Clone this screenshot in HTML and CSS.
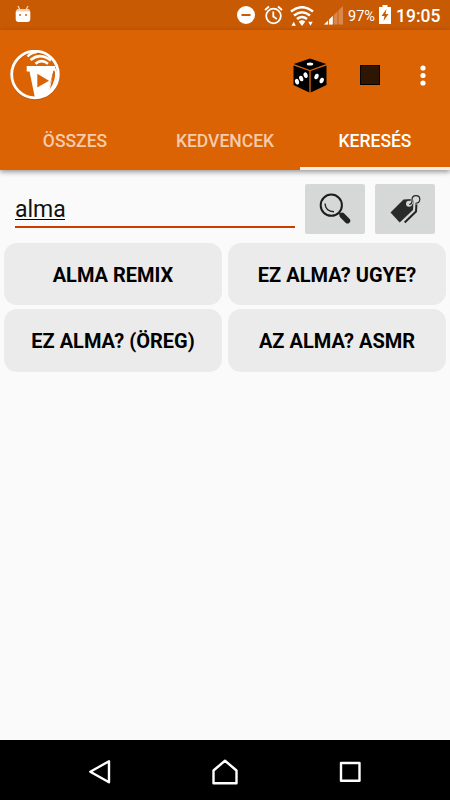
FILE: index.html
```html
<!DOCTYPE html>
<html lang="hu">

<head>
    <meta charset="UTF-8">
    <meta name="viewport" content="width=device-width, initial-scale=1.0">
    <title>Keresés</title>
    <link rel="stylesheet" href="styles.css">
</head>

<body>
    <div class="screen">
        <div class="status-bar">
            <svg class="debug-icon" width="16" height="18" viewBox="0 0 16 18">
                <path d="M3 1l2 4M13 1l-2 4" stroke="#f6d9c4" stroke-width="1.3" />
                <path d="M1 7q0-3 2-3h10q2 0 2 3z" fill="#f3cfb5" />
                <path d="M.7 6.500h14.600v7.500q0 3-3 3H3.700q-3 0-3-3z" fill="#fff" />
                <path d="M4 9h2v2H4zM10 9h2v2h-2z" fill="#e08a50" />
            </svg>
            <div class="status-right">
                <svg width="18" height="18" viewBox="0 0 18 18">
                    <circle cx="9" cy="9" r="9" fill="#fff" />
                    <path d="M4.500 9h9" stroke="#c85a04" stroke-width="2" />
                </svg>
                <svg class="alarm" width="19" height="20" viewBox="0 0 19 20">
                    <g fill="none" stroke="#fff" stroke-width="1.800">
                        <circle cx="9.500" cy="11" r="7.300" />
                        <path d="M9.300 6.500v5l3.500 2.500M1 5l4-3.500M18 5l-4-3.500" />
                    </g>
                </svg>
                <svg class="wifi" width="24" height="21" viewBox="0 0 24 21">
                    <g fill="none" stroke="#fff" stroke-width="2.600">
                        <path d="M1 5.500q11-8.500 22 0" />
                        <path d="M4 9.500q8-6.500 16 0" />
                        <path d="M7 13q5-4 10 0" />
                    </g>
                    <path d="M8.700 15.500q3.300-2.600 6.600 0L12 20zM1.500 19.700l2.200-4 2.200 4zM18.300 15.700h4.400l-2.200 4z" fill="#fff" />
                </svg>
                <svg class="signal" width="20" height="19" viewBox="0 0 20 19">
                    <path d="M0 18.500L19 0v18.500z" fill="#da874b" />
                    <path d="M0 18.500l9-8.800v8.800z" fill="#fff" />
                    <path d="M4.500 10v9M9.300 5v14M14 0v19" stroke="#c85a04" stroke-width=".9" />
                </svg>
                <span class="battery-level">97%</span>
                <svg class="battery" width="12" height="19" viewBox="0 0 12 19">
                    <path d="M3.500 0h5v2H12v17H0V2h3.500z" fill="#fff" />
                    <path d="M7.500 4L2.500 11h3l-1 5 5-7h-3z" fill="#c85a04" />
                </svg>
                <span class="clock">19:05</span>
            </div>
        </div>

        <header class="app-header">
            <div class="toolbar">
                <svg class="logo" width="50" height="51" viewBox="0 0 50 51">
                    <circle cx="25" cy="25.500" r="23.300" fill="none" stroke="#a84c04" stroke-opacity=".5" stroke-width="2.800" />
                    <circle cx="25" cy="24.500" r="23.300" fill="none" stroke="#fff" stroke-width="2.800" />
                    <path d="M17.500 6.500Q21 2.500 27 2" fill="none" stroke="#fff" stroke-width="2.500" />
                    <path d="M20.500 10q9.500-8 20.500.5M25.500 13.700q6-5 12.500 0" fill="none" stroke="#fff" stroke-width="2.700" />
                    <path d="M16.700 16h28.500v4.500h-1.700L37 45.500l-12 2.500L19.500 21.500h-2.800z" fill="#fff" />
                    <path d="M45.500 18l2.500 6-3 12-9 11 2-7z" fill="#fff" />
                    <path d="M45 21.500q.8 9-5 17.500l3.300-17.500z" fill="#db6304" />
                    <path d="M27.300 23.800v13.700L39 30.700z" fill="#db6304" />
                </svg>
                <svg class="dice" width="34" height="35" viewBox="0 0 34 35">
                    <path d="M17 .5L33.300 6 17 12 .7 6z" />
                    <path d="M.5 7.500L16.300 13v21.500L.5 27z" />
                    <path d="M33.500 7.500L17.700 13v21.500L33.500 27z" />
                    <g fill="#fff">
                        <ellipse cx="17" cy="6" rx="3.200" ry="1.500" />
                        <ellipse cx="4" cy="23.700" rx="2" ry="2.900" transform="rotate(-18 4 23.700)" />
                        <ellipse cx="8.200" cy="20.500" rx="2" ry="2.900" transform="rotate(-18 8.200 20.500)" />
                        <ellipse cx="12.600" cy="17.200" rx="2" ry="2.900" transform="rotate(-18 12.600 17.200)" />
                        <ellipse cx="23.500" cy="18.500" rx="2" ry="2.900" transform="rotate(22 23.500 18.500)" />
                        <ellipse cx="28.700" cy="22.500" rx="2" ry="2.900" transform="rotate(22 28.700 22.500)" />
                    </g>
                </svg>
                <div class="stop"></div>
                <svg class="more" width="6" height="21" viewBox="0 0 6 21">
                    <g fill="#fff">
                        <circle cx="3" cy="3" r="2.600" />
                        <circle cx="3" cy="10.500" r="2.600" />
                        <circle cx="3" cy="18" r="2.600" />
                    </g>
                </svg>
            </div>
            <nav class="tabs">
                <div class="tab">ÖSSZES</div>
                <div class="tab">KEDVENCEK</div>
                <div class="tab active">KERESÉS</div>
            </nav>
        </header>

        <main class="content">
            <div class="search-row">
                <div class="search-field"><span class="search-text">alma</span></div>
                <div class="icon-button">
                    <svg width="60" height="50" viewBox="0 0 60 50">
                        <circle cx="26.300" cy="21.200" r="10.600" fill="none" stroke="#1c1c1c" stroke-width="2" />
                        <path d="M20 19.500q.5 8 9 8.300" fill="none" stroke="#222" stroke-width="1.400" />
                        <path d="M33.500 28.500l3 2.500" stroke="#222" stroke-width="2" />
                        <path d="M37.300 31.500l5.200 5.200" stroke="#222" stroke-width="5.500" stroke-linecap="round" />
                    </svg>
                </div>
                <div class="icon-button">
                    <svg width="60" height="50" viewBox="0 0 60 50">
                        <path d="M15.500 28.500L28.500 15.500l8.500-.5 1.500 1.500-.5 9.500-13.300 12.500z" fill="#2a2a2a" />
                        <path d="M41.500 19l-.5 8.500L29.700 38.500" fill="none" stroke="#222" stroke-width="2" />
                        <circle cx="34" cy="19.700" r="3" fill="#d6d8d7" />
                        <path d="M34.200 20.500q3.300-.5 2.800-4.500c0-6 7.800-5.500 7.800-.5q-.3 3.700-4 3.700" fill="none" stroke="#d6d8d7" stroke-width="2.800" />
                        <path d="M34.200 20.500q3.300-.5 2.800-4.500c0-6 7.800-5.500 7.800-.5q-.3 3.700-4 3.700" fill="none" stroke="#222" stroke-width="1.200" />
                    </svg>
                </div>
            </div>
            <div class="sounds">
                <div class="sound">ALMA REMIX</div>
                <div class="sound">EZ ALMA? UGYE?</div>
                <div class="sound">EZ ALMA? (ÖREG)</div>
                <div class="sound">AZ ALMA? ASMR</div>
            </div>
        </main>

        <footer class="nav-bar">
            <svg width="24" height="26" viewBox="0 0 24 26">
                <path d="M21 2.300v20.900L2.300 12.700z" />
            </svg>
            <svg width="26" height="26" viewBox="0 0 26 26">
                <path d="M1.500 24.300V11.500L13 1.700l11.500 9.800v12.800z" />
            </svg>
            <svg width="24" height="26" viewBox="0 0 24 26">
                <path d="M3 4h18.500v17.700H3z" />
            </svg>
        </footer>
    </div>
</body>

</html>
```
FILE: styles.css
```css
body {
    font-family: Roboto, sans-serif;
    background-color: #fafafa;
    margin: 0;
    padding: 0;
}

svg {
    display: block;
    flex-shrink: 0;
}

.screen {
    display: flex;
    flex-direction: column;
    width: 450px;
    height: 800px;
    overflow: hidden;
}

.status-bar {
    display: flex;
    justify-content: space-between;
    height: 30px;
    padding: 0 10px 0 15px;
    background-color: #c85a04;
    color: #fff;
}

.debug-icon {
    margin-top: 5px;
}

.status-right {
    display: flex;
    align-items: center;
}

.alarm {
    margin-left: 9px;
    margin-bottom: 1px;
}

.wifi {
    margin-left: 7px;
    margin-top: 2px;
}

.signal {
    margin-left: 10px;
    margin-top: 1px;
}

.battery-level {
    width: 27px;
    margin-left: 4px;
    margin-top: 3px;
    font-size: 14.5px;
    white-space: nowrap;
}

.battery {
    margin-left: 4px;
    margin-bottom: 1px;
}

.clock {
    width: 44px;
    margin-left: 5px;
    margin-top: 1px;
    font-size: 17.5px;
    font-weight: 500;
    white-space: nowrap;
}

.app-header {
    position: relative;
    height: 140px;
    background-color: #db6304;
    box-shadow: 0 2px 5px rgba(0, 0, 0, 0.4);
}

.toolbar {
    display: flex;
    align-items: center;
    height: 90px;
    padding: 0 24px 0 10px;
}

.dice {
    margin-left: auto;
}

.stop {
    width: 18px;
    height: 18px;
    margin-left: 33px;
    border: 1px solid #000;
    background-color: #2f1602;
}

.more {
    margin-left: 40px;
}

.tabs {
    display: grid;
    grid-template-columns: repeat(3, 150px);
    height: 50px;
}

.tab {
    box-sizing: border-box;
    padding-top: 1px;
    color: #f5cbad;
    font-size: 17.5px;
    font-weight: 500;
    line-height: 40px;
    text-align: center;
}

.tab.active {
    border-bottom: 3px solid #fcebdf;
    color: #fff;
}

.content {
    flex: 1;
}

.search-row {
    display: flex;
    gap: 10px;
    padding: 14px 15px 9px;
}

.search-field {
    box-sizing: border-box;
    width: 280px;
    height: 44px;
    border-bottom: 2px solid #cc3e00;
}

.search-text {
    display: block;
    width: 50px;
    height: 23px;
    margin-top: 12px;
    border-bottom: 1px solid #000;
    color: #111;
    font-size: 23px;
    line-height: 28px;
}

.icon-button {
    width: 60px;
    height: 50px;
    border-radius: 2px;
    background-color: #d6d8d7;
}

.sounds {
    display: grid;
    grid-template-columns: 218px 218px;
    gap: 4px 6px;
    padding: 0 4px;
}

.sound {
    height: 62.4px;
    border-radius: 13px;
    background-color: #ebebeb;
    color: #000;
    font-size: 20px;
    font-weight: 700;
    line-height: 64px;
    text-align: center;
}

.nav-bar {
    display: flex;
    align-items: center;
    justify-content: space-between;
    height: 60px;
    padding: 3px 88px 0;
    box-sizing: border-box;
    background-color: #000;
}

.nav-bar path {
    fill: none;
    stroke: #fff;
    stroke-width: 2.4;
    stroke-linejoin: round;
}
```
